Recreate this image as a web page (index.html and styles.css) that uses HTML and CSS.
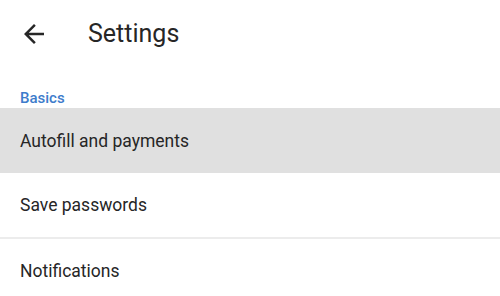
FILE: index.html
```html
<!DOCTYPE html>
<html lang="en">
<head>
    <meta charset="UTF-8">
    <meta name="viewport" content="width=device-width, initial-scale=1.0">
    <title>Settings</title>
    <link rel="stylesheet" href="styles.css">
</head>
<body>
    <div class="toolbar">
        <svg class="back-icon" viewBox="0 0 24 24" width="30" height="30">
            <path d="M20 11H7.83l5.59-5.59L12 4l-8 8 8 8 1.41-1.41L7.83 13H20v-2z"/>
        </svg>
        <h1 class="title">Settings</h1>
    </div>
    <div class="section-header">Basics</div>
    <div class="item active">Autofill and payments</div>
    <div class="item">Save passwords</div>
    <div class="divider"></div>
    <div class="item">Notifications</div>
</body>
</html>
```

FILE: styles.css
```css
body {
    font-family: Roboto, Arial, sans-serif;
    background-color: #ffffff;
    margin: 0;
    padding: 0;
    color: #262626;
}
.toolbar {
    display: flex;
    align-items: center;
    height: 67px;
    padding-left: 19px;
}
.back-icon {
    fill: #262626;
    flex-shrink: 0;
}
.title {
    font-size: 25px;
    font-weight: 400;
    margin: 0 0 0 39px;
}
.section-header {
    color: #3d7ccb;
    font-size: 15px;
    font-weight: 500;
    padding: 22px 20px 0;
    height: 19px;
}
.item {
    height: 64px;
    display: flex;
    align-items: center;
    padding-left: 20px;
    font-size: 17.5px;
}
.item.active {
    background-color: #e0e0e0;
    height: 65px;
}
.divider {
    height: 2px;
    background-color: #ececec;
}
```
